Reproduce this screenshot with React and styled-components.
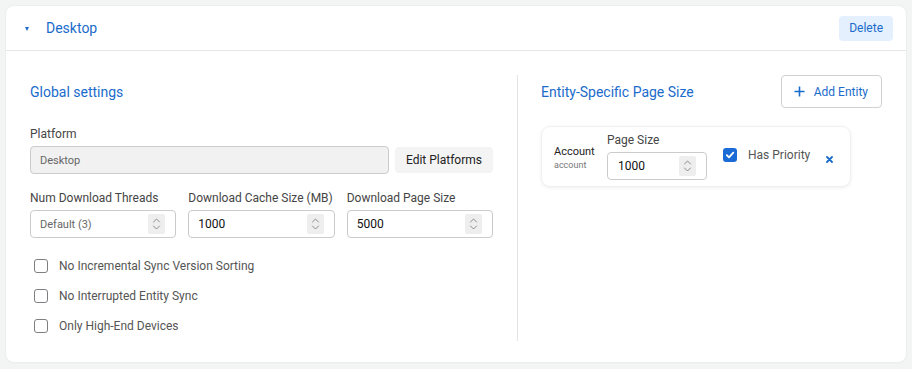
import React from "react";
import styled, { createGlobalStyle } from "styled-components";

const Global = createGlobalStyle`
  html, body { margin: 0; padding: 0; background: #f3f4f4; }
  body { font-family: Roboto, "Liberation Sans", Arial, sans-serif; }
  * { box-sizing: border-box; }
`;

const BLUE = "#1a6bcc";

const Page = styled.div`
  padding: 6px 6px 7px 6px;
  width: 912px;
  height: 369px;
`;

const Card = styled.section`
  background: #fff;
  border-radius: 8px;
  box-shadow: 0 0 0 1px #eceeee, 0 1px 2px rgba(0,0,0,0.05);
  height: 356px;
  display: flex;
  flex-direction: column;
`;

const Header = styled.header`
  height: 45px;
  border-bottom: 1px solid #e4e5e6;
  display: flex;
  align-items: center;
  padding: 0 13px 0 19px;
`;

const Caret = styled.span`
  width: 0; height: 0;
  border-left: 2.5px solid transparent;
  border-right: 2.5px solid transparent;
  border-top: 4px solid ${BLUE};
  margin-right: 17px;
  margin-top: 1px;
`;

const Title = styled.h2`
  margin: 0;
  font-size: 14px;
  font-weight: 400;
  color: ${BLUE};
  flex: 1;
`;

const SoftButton = styled.button`
  font-family: inherit;
  height: ${p => p.$h || 25}px;
  padding: 0 ${p => p.$px || 10}px;
  border: none;
  border-radius: 4px;
  background: ${p => p.$tone === "blue" ? "#e4f0fd" : "#f4f4f4"};
  color: ${p => p.$tone === "blue" ? BLUE : "#222"};
  font-size: 12px;
  cursor: pointer;
  flex: none;
`;

const Body = styled.div`
  flex: 1;
  display: flex;
  padding: 24px 24px 21px 24px;
`;

const Column = styled.div`
  display: flex;
  flex-direction: column;
  width: ${p => p.$w}px;
`;

const Divider = styled.div`
  width: 1px;
  background: #e2e3e4;
  margin: 0 23px 0 24px;
`;

const SectionHead = styled.div`
  height: 33px;
  display: flex;
  align-items: center;
  justify-content: space-between;
`;

const SectionTitle = styled.h3`
  margin: 0;
  font-size: 14px;
  font-weight: 400;
  color: ${BLUE};
`;

const OutlineButton = styled.button`
  font-family: inherit;
  height: 33px;
  padding: 0 13px 0 12px;
  border: 1px solid #cfd1d3;
  border-radius: 4px;
  background: #fff;
  color: ${BLUE};
  font-size: 12px;
  display: flex;
  align-items: center;
  gap: 9px;
`;

const Field = styled.div`
  display: flex;
  flex-direction: column;
  gap: 5px;
  margin-top: ${p => p.$mt || 0}px;
  flex: ${p => p.$flex || "none"};
  min-width: 0;
`;

const Label = styled.label`
  font-size: 12px;
  line-height: 14px;
  color: #454545;
`;

const Row = styled.div`
  display: flex;
  align-items: ${p => p.$align || "stretch"};
  gap: ${p => p.$gap || 12}px;
  margin-top: ${p => p.$mt || 0}px;
`;

const InputBox = styled.div`
  height: 28px;
  flex: none;
  width: ${p => p.$w ? p.$w + "px" : "auto"};
  ${p => p.$grow && "flex: 1 1 auto;"}
  border: 1px solid #c9cbcd;
  border-radius: 4px;
  background: ${p => p.$disabled ? "#f1f1f1" : "#fff"};
  display: flex;
  align-items: center;
  padding: 0 10px 0 ${p => p.$pl || 9}px;
`;

const InputText = styled.span`
  flex: 1;
  font-size: ${p => p.$muted ? 11 : 12}px;
  color: ${p => p.$muted ? "#666" : "#111"};
`;

const Spin = styled.span`
  width: 17px;
  height: 20px;
  background: #eeeeef;
  border-radius: 2px;
  display: flex;
  align-items: center;
  justify-content: center;
`;

const Spinner = () => (
  <Spin>
    <svg width="9" height="14" viewBox="0 0 9 14" fill="none" stroke="#8a8c8f" strokeWidth="1" strokeLinecap="round" strokeLinejoin="round">
      <path d="M1.5 5 L4.5 2 L7.5 5" />
      <path d="M1.5 9 L4.5 12 L7.5 9" />
    </svg>
  </Spin>
);

const Checks = styled.div`
  margin-top: 13px;
  display: flex;
  flex-direction: column;
`;

const CheckRow = styled.label`
  height: 30px;
  display: flex;
  align-items: center;
  padding-left: 4px;
  gap: 11px;
  font-size: 12px;
  color: #555;
`;

const Box = styled.span`
  width: 14px;
  height: 14px;
  border-radius: 3px;
  border: ${p => p.$checked ? "none" : "1.3px solid #7d7f82"};
  background: ${p => p.$checked ? "#1a6bd6" : "#fff"};
  display: flex;
  align-items: center;
  justify-content: center;
  flex: none;
`;

const Check = ({ checked }) => (
  <Box $checked={checked}>
    {checked && (
      <svg width="10" height="10" viewBox="0 0 10 10" fill="none" stroke="#fff" strokeWidth="1.8" strokeLinecap="round" strokeLinejoin="round">
        <path d="M1.8 5.2 L4 7.4 L8.3 2.6" />
      </svg>
    )}
  </Box>
);

const EntityCard = styled.div`
  margin: 19px 0 0 1px;
  width: 308px;
  height: 59px;
  border-radius: 8px;
  background: #fff;
  box-shadow: 0 0 0 1px #eef0f1, 0 1px 4px rgba(0,0,0,0.10);
  display: flex;
  align-items: center;
  padding: 0 12px;
`;

const EntityName = styled.div`
  display: flex;
  flex-direction: column;
  width: 53px;
  margin-top: 4px;
`;

const NameMain = styled.span`
  font-size: 11px;
  color: #222;
  line-height: 14px;
`;

const NameSub = styled.span`
  font-size: 9px;
  color: #777;
  line-height: 13px;
`;

const Priority = styled.div`
  display: flex;
  align-items: center;
  gap: 11px;
  margin-left: 16px;
  margin-top: -3px;
  font-size: 12px;
  color: #555;
`;

const Remove = styled.span`
  margin-left: 16px;
  margin-top: 6px;
  display: flex;
`;

export default function App() {
  return (
    <>
      <Global />
      <Page>
        <Card>
          <Header>
            <Caret />
            <Title>Desktop</Title>
            <SoftButton $tone="blue" $px={10}>Delete</SoftButton>
          </Header>
          <Body>
            <Column $w={463}>
              <SectionHead>
                <SectionTitle>Global settings</SectionTitle>
              </SectionHead>
              <Field $mt={19}>
                <Label>Platform</Label>
                <Row $gap={6} $align="center">
                  <InputBox $disabled $grow>
                    <InputText $muted>Desktop</InputText>
                  </InputBox>
                  <SoftButton $h={26} $px={11}>Edit Platforms</SoftButton>
                </Row>
              </Field>
              <Row $mt={17}>
                <Field $flex={1}>
                  <Label>Num Download Threads</Label>
                  <InputBox>
                    <InputText $muted>Default (3)</InputText>
                    <Spinner />
                  </InputBox>
                </Field>
                <Field $flex={1}>
                  <Label>Download Cache Size (MB)</Label>
                  <InputBox>
                    <InputText>1000</InputText>
                    <Spinner />
                  </InputBox>
                </Field>
                <Field $flex={1}>
                  <Label>Download Page Size</Label>
                  <InputBox>
                    <InputText>5000</InputText>
                    <Spinner />
                  </InputBox>
                </Field>
              </Row>
              <Checks>
                <CheckRow><Check />No Incremental Sync Version Sorting</CheckRow>
                <CheckRow><Check />No Interrupted Entity Sync</CheckRow>
                <CheckRow><Check />Only High-End Devices</CheckRow>
              </Checks>
            </Column>
            <Divider />
            <Column $w={341}>
              <SectionHead>
                <SectionTitle>Entity-Specific Page Size</SectionTitle>
                <OutlineButton>
                  <svg width="11" height="11" viewBox="0 0 11 11" stroke={BLUE} strokeWidth="1.6">
                    <path d="M5.5 0.5 V10.5 M0.5 5.5 H10.5" />
                  </svg>
                  Add Entity
                </OutlineButton>
              </SectionHead>
              <EntityCard>
                <EntityName>
                  <NameMain>Account</NameMain>
                  <NameSub>account</NameSub>
                </EntityName>
                <Field>
                  <Label>Page Size</Label>
                  <InputBox $w={100} $pl={10}>
                    <InputText>1000</InputText>
                    <Spinner />
                  </InputBox>
                </Field>
                <Priority>
                  <Check checked />
                  Has Priority
                </Priority>
                <Remove>
                  <svg width="7" height="7" viewBox="0 0 7 7" stroke={BLUE} strokeWidth="1.8" strokeLinecap="round">
                    <path d="M1 1 L6 6 M6 1 L1 6" />
                  </svg>
                </Remove>
              </EntityCard>
            </Column>
          </Body>
        </Card>
      </Page>
    </>
  );
}
